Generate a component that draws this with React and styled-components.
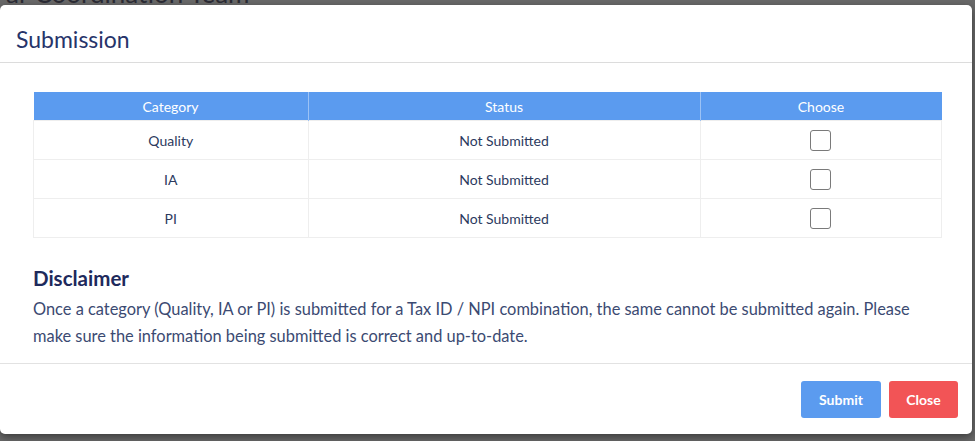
import React from 'react';
import styled, { createGlobalStyle } from 'styled-components';

const Global = createGlobalStyle`
  html, body { margin: 0; padding: 0; }
  body {
    background: #696969;
    font-family: Lato, "Noto Sans", sans-serif;
    width: 975px;
    height: 441px;
    overflow: hidden;
  }
`;

const Backdrop = styled.div`
  height: 5px;
  overflow: hidden;
  padding-left: 6px;
`;

const BehindText = styled.div`
  margin-top: -20px;
  font-size: 26px;
  line-height: 26px;
  color: #2a2a33;
  font-family: Lato, sans-serif;
`;

const Modal = styled.div`
  width: 972px;
  height: 429px;
  background: #fff;
  border-radius: 5px;
  box-shadow: 0 3px 8px rgba(0, 0, 0, 0.45);
  display: flex;
  flex-direction: column;
  box-sizing: border-box;
`;

const Header = styled.div`
  height: 58px;
  box-sizing: border-box;
  border-bottom: 1px solid #dcdcdc;
  display: flex;
  align-items: center;
  padding: 10px 16px 0;
`;

const Title = styled.h2`
  margin: 0;
  font-size: 23px;
  font-weight: 400;
  color: #27346a;
`;

const Body = styled.div`
  padding: 29px 30px 0 33px;
  flex: 1;
`;

const Table = styled.table`
  width: 100%;
  border-collapse: collapse;
  font-size: 14px;
`;

const Th = styled.th`
  background: #5b9bef;
  color: #fff;
  font-weight: 400;
  height: 28px;
  padding: 0;
  border-left: 1px solid #9cc2f5;
  width: ${p => p.w};
  &:first-child { border-left: none; }
`;

const Td = styled.td`
  height: 38px;
  padding: 0;
  text-align: center;
  color: #2c3a5e;
  border: 1px solid #eeeeee;
`;

const Box = styled.input.attrs({ type: 'checkbox' })`
  appearance: none;
  width: 21px;
  height: 21px;
  margin: 3px 0 0;
  border: 1.5px solid #7a7a7a;
  border-radius: 3px;
  box-sizing: border-box;
  background: #fff;
`;

const Disclaimer = styled.div`
  margin-top: 28px;
`;

const DTitle = styled.h3`
  margin: 0 0 5px;
  font-size: 20.5px;
  font-weight: 700;
  color: #1e2a5c;
`;

const DText = styled.p`
  margin: 0;
  font-size: 16.4px;
  line-height: 27px;
  color: #3b4a72;
  padding-right: 20px;
`;

const Footer = styled.div`
  height: 70px;
  border-top: 1px solid #e2e2e2;
  display: flex;
  justify-content: flex-end;
  align-items: center;
  gap: 8px;
  padding: 0 14px 0 0;
`;

const Button = styled.button`
  height: 37px;
  padding: 0;
  width: ${p => p.w}px;
  border: none;
  border-radius: 3px;
  background: ${p => p.bg};
  color: #fff;
  font-family: inherit;
  font-size: 14px;
  font-weight: 700;
`;

const rows = ['Quality', 'IA', 'PI'];

export default function App() {
  return (
    <>
      <Global />
      <Backdrop>
        <BehindText>ar Coordination Team</BehindText>
      </Backdrop>
      <Modal>
        <Header>
          <Title>Submission</Title>
        </Header>
        <Body>
          <Table>
            <thead>
              <tr>
                <Th w="274px">Category</Th>
                <Th w="391px">Status</Th>
                <Th>Choose</Th>
              </tr>
            </thead>
            <tbody>
              {rows.map(r => (
                <tr key={r}>
                  <Td>{r}</Td>
                  <Td>Not Submitted</Td>
                  <Td><Box /></Td>
                </tr>
              ))}
            </tbody>
          </Table>
          <Disclaimer>
            <DTitle>Disclaimer</DTitle>
            <DText>
              Once a category (Quality, IA or PI) is submitted for a Tax ID / NPI combination, the same cannot be submitted again. Please make sure the information being submitted is correct and up-to-date.
            </DText>
          </Disclaimer>
        </Body>
        <Footer>
          <Button w={80} bg="#5b9bef">Submit</Button>
          <Button w={69} bg="#f25456">Close</Button>
        </Footer>
      </Modal>
    </>
  );
}
